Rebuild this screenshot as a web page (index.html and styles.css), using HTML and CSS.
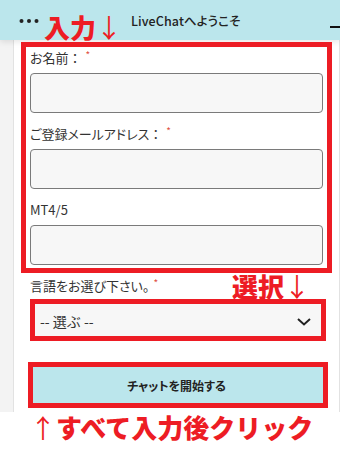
FILE: index.html
```html
<!DOCTYPE html>
<html lang="ja">
<head>
<meta charset="utf-8">
<title>LiveChat</title>
<link rel="stylesheet" href="styles.css">
</head>
<body>
<div class="header">
  <svg class="dots" width="20" height="6" viewBox="0 0 20 6"><circle cx="2.5" cy="3" r="2"/><circle cx="10" cy="3" r="2"/><circle cx="17.5" cy="3" r="2"/></svg>
  <div class="title">LiveChatへようこそ</div>
  <div class="minimize"></div>
</div>
<div class="main">
  <div class="gutter"></div>
  <form class="panel">
    <div class="field">
      <label class="label">お名前<span class="colon">：</span><span class="req">*</span></label>
      <div class="input"></div>
    </div>
    <div class="field">
      <label class="label">ご登録メールアドレス<span class="colon">：</span><span class="req">*</span></label>
      <div class="input"></div>
    </div>
    <div class="field">
      <label class="label">MT4/5</label>
      <div class="input"></div>
    </div>
    <div class="field field-last">
      <label class="label">言語をお選び下さい。<span class="req">*</span></label>
      <div class="select">
        <span>-- 選ぶ --</span>
        <svg class="chevron" width="14" height="8" viewBox="0 0 14 8"><path d="M1 1l6 5.5L13 1" fill="none" stroke="#222" stroke-width="2"/></svg>
      </div>
    </div>
    <button type="button" class="start">チャットを開始する</button>
  </form>
</div>

<div class="box box-input"></div>
<div class="box box-select"></div>
<div class="box box-start"></div>
<div class="note note-input">入力<span class="arrow">↓</span></div>
<div class="note note-select">選択<span class="arrow">↓</span></div>
<div class="note note-click"><span class="arrow">↑</span>すべて入力後クリック</div>
</body>
</html>
```
FILE: styles.css
```css
* { box-sizing: border-box; }
html, body { margin: 0; padding: 0; }
body {
  width: 340px;
  height: 453px;
  overflow: hidden;
  position: relative;
  background: #ffffff;
  font-family: "Noto Sans CJK JP", "Noto Sans", sans-serif;
  color: #333;
}
.header {
  position: relative;
  z-index: 1;
  height: 40px;
  background: #bbe6ec;
  display: flex;
  align-items: center;
  padding-left: 19px;
  box-shadow: 0 2px 6px rgba(0, 0, 0, 0.10);
}
.dots { fill: #222; display: block; margin-top: 2px; }
.title {
  margin-left: 92px;
  font-size: 12.5px;
  font-weight: 500;
  color: #222;
  font-feature-settings: "palt";
  letter-spacing: 0.1px;
}
.minimize {
  margin-left: auto;
  width: 10px;
  height: 2px;
  background: #111;
  margin-top: 14px;
}
.main {
  display: flex;
  height: 372px;
}
.gutter {
  width: 14px;
  background: #f3f3f3;
  border-right: 1px solid #e2e2e2;
}
.panel {
  flex: 1;
  background: #ffffff;
  border-right: 1px solid #e2e2e2;
  padding: 8px 16px 0 16px;
  margin: 0;
}
.field { margin-bottom: 11px; }
.field-last { margin-bottom: 0; }
.label {
  display: block;
  height: 20px;
  line-height: 20px;
  font-size: 13px;
  color: #333;
  margin-bottom: 5px;
  font-feature-settings: "palt";
}
.colon { font-feature-settings: normal; }
.req {
  color: #e0513f;
  font-size: 10px;
  vertical-align: top;
  line-height: 14px;
  margin-left: 4px;
}
.input, .select {
  height: 40px;
  background: #f7f7f7;
  border: 1px solid #7a7a7a;
  border-radius: 4px;
}
.select {
  display: flex;
  align-items: center;
  justify-content: space-between;
  padding: 0 11px 0 9px;
  font-size: 14px;
  color: #333;
}
.chevron { display: block; margin-top: 1px; }
.start {
  display: block;
  width: 100%;
  height: 40px;
  margin-top: 24px;
  border: none;
  background: #bbe6ec;
  font-family: inherit;
  font-size: 12px;
  font-weight: 700;
  color: #222;
  font-feature-settings: "palt";
}
.box {
  position: absolute;
  border: 5px solid #ed1c24;
  z-index: 2;
}
.box-input { left: 21px; top: 42px; width: 311px; height: 231px; }
.box-select { left: 30px; top: 299px; width: 296px; height: 42px; }
.box-start { left: 28px; top: 362px; width: 300px; height: 46px; }
.note {
  position: absolute;
  z-index: 3;
  color: #ed1c24;
  font-size: 26px;
  font-weight: 900;
  line-height: 30px;
  white-space: nowrap;
}
.arrow { font-weight: 400; }
.note-input { left: 44px; top: 12px; }
.note-select { left: 232px; top: 271px; }
.note-click { left: 30px; top: 412px; }
```
